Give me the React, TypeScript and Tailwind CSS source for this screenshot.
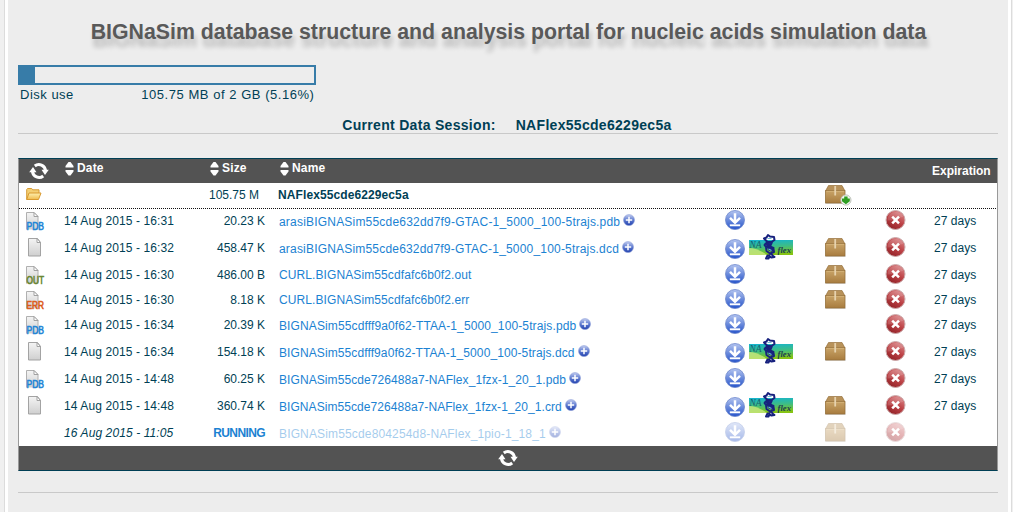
import React from "react";

type Kind = "pdb" | "file" | "out" | "err" | "none";

interface Row {
  kind: Kind;
  date: string;
  size: string;
  name: string;
  nameClass: string;
  more?: boolean;
  flex?: boolean;
  pack?: boolean;
  running?: boolean;
}

const rows: Row[] = [
  { kind: "pdb", date: "14 Aug 2015 - 16:31", size: "20.23 K", name: "arasiBIGNASim55cde632dd7f9-GTAC-1_5000_100-5trajs.pdb", nameClass: "tracking-[0.2px]", more: true },
  { kind: "file", date: "14 Aug 2015 - 16:32", size: "458.47 K", name: "arasiBIGNASim55cde632dd7f9-GTAC-1_5000_100-5trajs.dcd", nameClass: "tracking-[0.19px]", more: true, flex: true, pack: true },
  { kind: "out", date: "14 Aug 2015 - 16:30", size: "486.00 B", name: "CURL.BIGNASim55cdfafc6b0f2.out", nameClass: "tracking-[0.1px]", pack: true },
  { kind: "err", date: "14 Aug 2015 - 16:30", size: "8.18 K", name: "CURL.BIGNASim55cdfafc6b0f2.err", nameClass: "tracking-[0.1px]", pack: true },
  { kind: "pdb", date: "14 Aug 2015 - 16:34", size: "20.39 K", name: "BIGNASim55cdfff9a0f62-TTAA-1_5000_100-5trajs.pdb", nameClass: "tracking-[0.12px]", more: true },
  { kind: "file", date: "14 Aug 2015 - 16:34", size: "154.18 K", name: "BIGNASim55cdfff9a0f62-TTAA-1_5000_100-5trajs.dcd", nameClass: "tracking-[0.1px]", more: true, flex: true, pack: true },
  { kind: "pdb", date: "14 Aug 2015 - 14:48", size: "60.25 K", name: "BIGNASim55cde726488a7-NAFlex_1fzx-1_20_1.pdb", nameClass: "tracking-[0.08px]", more: true },
  { kind: "file", date: "14 Aug 2015 - 14:48", size: "360.74 K", name: "BIGNASim55cde726488a7-NAFlex_1fzx-1_20_1.crd", nameClass: "tracking-[0.06px]", more: true, flex: true, pack: true },
  { kind: "none", date: "16 Aug 2015 - 11:05", size: "RUNNING", name: "BIGNASim55cde804254d8-NAFlex_1pio-1_18_1", nameClass: "tracking-[0.15px]", more: true, pack: true, running: true },
];

function Gradients() {
  return (
    <svg width="0" height="0" className="absolute" aria-hidden="true">
      <defs>
        <linearGradient id="blue" x1="0" y1="0" x2="0" y2="1">
          <stop offset="0" stopColor="#b4c5f0" />
          <stop offset="0.5" stopColor="#6b8bdc" />
          <stop offset="1" stopColor="#2553ca" />
        </linearGradient>
        <linearGradient id="plus" x1="0" y1="0" x2="0" y2="1">
          <stop offset="0" stopColor="#c3cdf0" />
          <stop offset="0.5" stopColor="#5f7bd0" />
          <stop offset="1" stopColor="#1f3fae" />
        </linearGradient>
        <linearGradient id="red" x1="0.8" y1="0" x2="0.2" y2="1">
          <stop offset="0" stopColor="#dc8b8d" />
          <stop offset="0.5" stopColor="#bd4246" />
          <stop offset="1" stopColor="#8e1f24" />
        </linearGradient>
        <linearGradient id="paper" x1="0" y1="0" x2="0" y2="1">
          <stop offset="0" stopColor="#f4f4f4" />
          <stop offset="1" stopColor="#cfcfcf" />
        </linearGradient>
        <linearGradient id="boxFront" x1="0" y1="0" x2="0" y2="1">
          <stop offset="0" stopColor="#c9a468" />
          <stop offset="1" stopColor="#a87c3f" />
        </linearGradient>
        <linearGradient id="sky" x1="0" y1="0" x2="0.15" y2="1">
          <stop offset="0" stopColor="#14b4d2" />
          <stop offset="0.5" stopColor="#3dbd86" />
          <stop offset="1" stopColor="#86c414" />
        </linearGradient>
        <linearGradient id="folder" x1="0" y1="0" x2="0" y2="1">
          <stop offset="0" stopColor="#fdf0b0" />
          <stop offset="1" stopColor="#f0bb4d" />
        </linearGradient>
      </defs>
    </svg>
  );
}

function Download() {
  return (
    <svg width="20" height="20" viewBox="0 0 20 20" className="block shrink-0">
      <circle cx="10" cy="10" r="9.5" fill="url(#blue)" stroke="#6c86cc" strokeWidth="0.8" />
      <path d="M10 3.2V12M5 7.800L10 12.800l5-5" fill="none" stroke="#fff" strokeWidth="2.500" />
      <path d="M4.800 15.300h10.400" stroke="#fff" strokeWidth="1.900" />
    </svg>
  );
}

function Remove() {
  return (
    <svg width="21" height="20" viewBox="0 0 21 20" className="block shrink-0">
      <circle cx="10.500" cy="10" r="9.500" fill="url(#red)" stroke="#cbaaab" strokeWidth="1" />
      <path d="M2.500 10.500C2.500 5 6 2 10.500 2s7 2 7.500 5c-4 0-6 3.500-15.500 3.500z" fill="#fff" opacity="0.15" />
      <path d="M7.200 6.600l6.800 6.800M14 6.600l-6.800 6.800" stroke="#fff" strokeWidth="2.500" />
    </svg>
  );
}

function Pack({ add = false }: { add?: boolean }) {
  return (
    <svg width="28" height="21" viewBox="0 0 28 21" className="block shrink-0">
      <path d="M0 18.500h21" stroke="#dcdcdc" strokeWidth="1" />
      <path d="M3.500 .5h13.500L20 6H.5z" fill="#b8925a" stroke="#98733d" strokeWidth="0.7" />
      <path d="M.5 5.500h19.500V18H.5z" fill="url(#boxFront)" stroke="#94703a" strokeWidth="0.8" />
      <path d="M1.500 6.300h17.500" stroke="#d8b67e" strokeWidth="0.8" />
      <path d="M9.300 1h1.800v9.500H9.300z" fill="#e6d2ae" />
      {add && (
        <g>
          <circle cx="20.900" cy="15" r="5.100" fill="#f1f5ee" stroke="#b9bdb6" strokeWidth="0.9" />
          <path d="M19.200 11.500h3.400v2h2.200v2.700l-3.900 3-3.900-3v-2.700h2.200z" fill="#2e9e22" />
        </g>
      )}
    </svg>
  );
}

function Flex() {
  return (
    <svg width="44" height="26" viewBox="0 0 44 26" className="block shrink-0 overflow-visible">
      <path d="M0 6h44v15H0z" fill="url(#sky)" />
      <path d="M0 14c6 0 13 3 18 7H0z" fill="#c5e67c" opacity="0.85" />
      <text x="0.500" y="14" fontFamily="Liberation Serif, serif" fontSize="9.500" fontStyle="italic" fill="#17606c" textLength="12" lengthAdjust="spacingAndGlyphs">NA</text>
      <text x="28.500" y="18.500" fontFamily="Liberation Serif, serif" fontSize="9" fontStyle="italic" fontWeight="bold" fill="#1c3e52" textLength="13.500" lengthAdjust="spacingAndGlyphs">flex</text>
      <path d="M15 4.500l2.500-1L19 1l2 1.500 4 .5.500 3-3 2h-4zM17 9l6-1-2 4.500 3.500 1.500-1 2M17 13l-1.500-2L17 9M17 13l4-1 3.500 3 .5 3-4 1.500-3.500-2.500zM22 19l1.500 2.500 2 1.500-3 .500-2-1-1 2h-2.500l1.500-3h3" fill="none" stroke="#17217e" strokeWidth="2" strokeLinejoin="round" />
      <path d="M16.500 8.500l4-.5 1 4 3 3-1 3-4-1.500-2-4z" fill="#17217e" />
      <path d="M18.500 4.500h4M19.500 15l3 1.500" stroke="#6fc0d8" strokeWidth="1.200" />
    </svg>
  );
}

function More() {
  return (
    <svg width="12" height="12" viewBox="0 0 12 12" className="block shrink-0">
      <circle cx="6" cy="6" r="5.500" fill="url(#plus)" stroke="#8798d4" strokeWidth="0.500" />
      <path d="M6 2.800v6.400M2.800 6h6.400" stroke="#fff" strokeWidth="1.500" />
    </svg>
  );
}

function Paper({ kind }: { kind: Kind }) {
  if (kind === "none") return null;
  if (kind === "file") {
    return (
      <svg width="19" height="19" viewBox="0 0 19 19" className="block">
        <path d="M2.500.5h9l3 4v13.500h-12z" fill="url(#paper)" stroke="#a3a3a3" />
        <path d="M11 .5v4h3.500z" fill="#fff" stroke="#999" strokeWidth="0.9" />
      </svg>
    );
  }
  const label = { pdb: "PDB", out: "OUT", err: "ERR" }[kind];
  const fill = { pdb: "#1d84d6", out: "#67852f", err: "#dd5a18" }[kind];
  return (
    <svg width="20" height="22" viewBox="0 0 20 22" className="-mb-[3px] block overflow-visible">
      <path d="M.5 17.500V.5h7.500l4 4V17.500" fill="url(#paper)" stroke="#b0b0b0" />
      <path d="M8 .5v4h4z" fill="#fff" stroke="#999" strokeWidth="0.9" />
      <text x="0.500" y="17.500" fontFamily="Liberation Sans, sans-serif" fontSize="10.500" fill={fill} stroke={fill} strokeWidth="0.600" textLength="17.500" lengthAdjust="spacingAndGlyphs">
        {label}
      </text>
    </svg>
  );
}

function Refresh() {
  return (
    <svg width="20" height="18" viewBox="0 0 20 18" className="block">
      <path d="M5.800 4A6.600 6.600 0 0 1 16.500 8.500M14.200 14A6.600 6.600 0 0 1 3.500 9.500" fill="none" stroke="#fff" strokeWidth="3" />
      <path d="M4 5L.2 10.200h7.300zM16 13l3.800-5.200h-7.300z" fill="#fff" />
    </svg>
  );
}

function Sorter({ label }: { label: string }) {
  return (
    <div className="flex items-start gap-[3px]">
      <svg width="9" height="14" viewBox="0 0 9 14" className="mt-0.5 block">
        <path d="M3.500 0h2L8.500 4v1.500H.5V4zM.5 8h8v1.500L5.500 13.500H3.500L.5 9.500z" fill="#fff" />
      </svg>
      <span className="leading-[16px] tracking-[0.15px]">{label}</span>
    </div>
  );
}

function Folder() {
  return (
    <svg width="16" height="14" viewBox="0 0 16 14" className="block">
      <path d="M.7 11.500V1.500l.8-1h4.200l1 1.300h6.300V5" fill="#f3cf74" stroke="#d69a35" />
      <path d="M3 5h12L12.500 11.500H.7z" fill="url(#folder)" stroke="#d9992e" strokeLinejoin="round" />
    </svg>
  );
}

const cols = "grid grid-cols-[38px_145px_69px_445px_100px_60px_50px_1fr]";

const dots = "h-px w-full bg-[repeating-linear-gradient(to_right,#111_0_1px,transparent_1px_2px)]";

function FileRow({ row }: { row: Row }) {
  const fade = row.running ? "opacity-40" : "";
  return (
    <div className={`${cols} ${row.flex ? "h-[29px]" : "h-[25px]"} items-center`}>
      <div className={`pl-[7px] ${row.kind === "file" ? "pb-[3px]" : ""}`}><Paper kind={row.kind} /></div>
      <div className={`pl-[7px] tracking-[0.1px] ${row.running ? "italic" : ""}`}>{row.date}</div>
      <div className={`pr-[6px] text-right ${row.running ? "font-bold tracking-[-0.6px] text-[#1b82d2]" : ""}`}>{row.size}</div>
      <div className={`flex h-[15px] items-start gap-[3px] pl-[8px] text-[#1b82d2] ${fade}`}>
        <span className={row.more ? `pt-px ${row.nameClass}` : row.nameClass}>{row.name}</span>
        {row.more && <More />}
      </div>
      <div className={`flex items-center gap-1 pl-[9px] ${fade}`}>
        <div className={row.flex ? "pt-px" : "pb-[3px]"}><Download /></div>
        {row.flex && <div className="pb-[3px]"><Flex /></div>}
      </div>
      <div className={`pl-[9px] ${fade}`}>{row.pack && <Pack />}</div>
      <div className={`pb-[3px] pl-[9px] ${fade}`}><Remove /></div>
      <div className="pl-[8px] tracking-[0.05px]">{row.running ? "" : "27 days"}</div>
    </div>
  );
}

export default function App() {
  return (
    <div className="flex h-[512px] w-[1013px] overflow-hidden bg-[#f0f0f0] pl-[4px] font-['Liberation_Sans',Arial,sans-serif] text-[#003f55]">
      <Gradients />
      <div className="flex h-full w-[1008px] border-x border-[#dcdcdc] bg-white px-[3px]">
        <div className="h-full w-full bg-[#ededed] pr-[10px] pl-[10px]">
          <h1 className="h-[65px] pt-[19px] pl-px text-center text-[21.3px] leading-[26px] font-bold whitespace-nowrap text-[#595959] [text-shadow:2px_8px_5px_rgba(0,0,0,0.22)]">
            BIGNaSim database structure and analysis portal for nucleic acids simulation data
          </h1>
          <div className="h-[20px] w-[298px] border-2 border-[#377ca8]">
            <div className="h-full w-[15px] bg-[#377ca8]" />
          </div>
          <div className="flex h-[32px] w-[298px] justify-between pt-px pr-[1.5px] pl-[2px] text-[13px] leading-[17px]">
            <span className="tracking-[0.5px]">Disk use</span>
            <span className="tracking-[0.54px]">105.75 MB of 2 GB (5.16%)</span>
          </div>
          <div className="flex h-[17px] justify-center gap-5 border-b border-[#c9c9c9] pr-[2px] text-[14px] leading-[16px] font-bold tracking-[0.3px]">
            <span>Current Data Session:</span>
            <span>NAFlex55cde6229ec5a</span>
          </div>

          <div className="mt-[24px] h-[313px] w-[980px] border border-x-[#999] border-y-[#003f55] bg-white text-[12px] leading-[15px] whitespace-nowrap">
            <div className={`${cols} h-[24px] bg-[#535353] font-bold text-white`}>
              <div className="pt-[3px] pl-[9.5px]"><Refresh /></div>
              <div className="pt-px pl-[8px]"><Sorter label="Date" /></div>
              <div className="pt-px pl-[8px]"><Sorter label="Size" /></div>
              <div className="pt-px pl-[9px]"><Sorter label="Name" /></div>
              <div />
              <div />
              <div />
              <div className="pt-[5px] pl-[6px] leading-[15px]">Expiration</div>
            </div>
            <div className={`${cols} h-[25px]`}>
              <div className="pt-[5px] pl-[7px]"><Folder /></div>
              <div />
              <div className="pt-[5px] pl-[7px]">105.75 M</div>
              <div className="pt-[5px] pl-[7px] font-bold tracking-[0.1px]">NAFlex55cde6229ec5a</div>
              <div />
              <div className="pt-[2px] pl-[9px]"><Pack add /></div>
              <div />
              <div />
            </div>
            <div className={dots} />
            {rows.map((row) => (
              <FileRow key={row.name} row={row} />
            ))}
            <div className="flex h-[24px] items-center justify-center bg-[#535353]">
              <Refresh />
            </div>
          </div>
          <div className="mt-[21px] h-px bg-[#c9c9c9]" />
        </div>
      </div>
    </div>
  );
}
